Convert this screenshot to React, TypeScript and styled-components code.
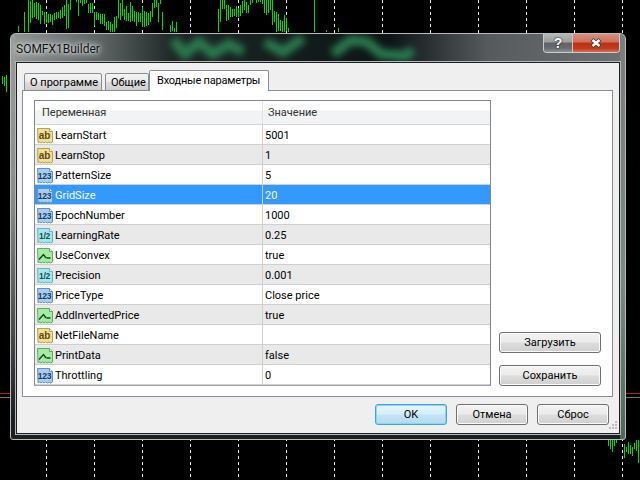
import styled, { createGlobalStyle } from 'styled-components';

const GlobalStyle = createGlobalStyle`
  html, body { margin: 0; padding: 0; background: #000; }
  body { font-family: Roboto, "Liberation Sans", Arial, sans-serif; font-size: 11px; color: #000; }
`;

const Desktop = styled.div`
  position: relative;
  width: 640px;
  height: 480px;
  overflow: hidden;
  background: #000;
`;

const ChartLayer = styled.svg`
  position: absolute;
  inset: 0;
`;

const Window = styled.div`
  position: absolute;
  left: 10px;
  top: 33px;
  width: 616px;
  height: 407px;
  box-sizing: border-box;
  display: flex;
  flex-direction: column;
  border: 1px solid #b9bcbd;
  border-radius: 6px 6px 3px 3px;
  padding: 0 5px 5px 4px;
  overflow: hidden;
  background:
    linear-gradient(180deg, #9a9d9d 0, #8a8d8d 40%, #1c2022 95%) left / 5px 100% no-repeat,
    linear-gradient(180deg, #7a7d7d 0, #7a8a84 60%, #4a6a58 100%) right / 5px 100% no-repeat,
    #1b2022;
`;

const TitleBar = styled.div`
  position: relative;
  height: 27px;
  flex: none;
  display: flex;
  align-items: center;
  padding: 1px 0 0 1px;
  background: linear-gradient(90deg, #8f9493 0, #5a6060 15%, #1e2727 26%, #15201f 40%, #0d1416 62%, #565a5c 78%, #6d7172 100%);
`;

const TitleGlow = styled.svg`
  position: absolute;
  left: 0;
  top: 0;
`;

const TitleText = styled.span`
  position: relative;
  font-size: 12px;
  color: #111;
  text-shadow: 0 0 6px #d8dcdc, 0 0 3px #d8dcdc, 0 0 8px #d8dcdc;
`;

const CaptionButtons = styled.div`
  position: absolute;
  top: 0;
  right: 0;
  display: flex;
  height: 18px;
  border: 1px solid #c9cccd;
  border-top: none;
  border-radius: 0 0 4px 4px;
  overflow: hidden;
`;

const CaptionButton = styled.div<{ $close?: boolean }>`
  display: flex;
  align-items: center;
  justify-content: center;
  box-sizing: border-box;
  width: ${(p) => (p.$close ? '47px' : '28px')};
  border-left: ${(p) => (p.$close ? '1px solid #e0c0b8' : 'none')};
  background: ${(p) =>
    p.$close
      ? 'linear-gradient(180deg, #d8907e 0, #cc705a 45%, #bb3014 50%, #c23a1c 80%, #d2705a 100%)'
      : 'linear-gradient(180deg, #b5b7b8 0, #9a9c9e 45%, #5e6266 50%, #6a6e72 80%, #8e9295 100%)'};
`;

const HelpMark = styled.span`
  font-family: "Liberation Sans", sans-serif;
  font-weight: 700;
  font-size: 14px;
  line-height: 1;
  color: #fff;
  text-shadow: 0 0 1px #222, 0 0 2px #222;
`;

const Client = styled.div`
  flex: 1;
  min-height: 0;
  position: relative;
  display: flex;
  flex-direction: column;
  background: #efefef;
  border: 1px solid #1c2022;
  box-shadow: 0 0 0 1px #b4b8b8;
  margin: 0 0 0 1px;
  padding: 7px 7px 0 5px;
`;

const TabStrip = styled.div`
  height: 21px;
  flex: none;
  display: flex;
  align-items: flex-end;
  padding-left: 2px;
  position: relative;
  z-index: 1;
  margin-bottom: -1px;
`;

const Tab = styled.div<{ $active?: boolean; $w: number; $gap?: number }>`
  box-sizing: border-box;
  width: ${(p) => p.$w}px;
  height: ${(p) => (p.$active ? '21px' : '18px')};
  margin-right: ${(p) => p.$gap ?? 0}px;
  padding: ${(p) => (p.$active ? '2px 0 0 7px' : '1px 0 0 5px')};
  border: 1px solid #898c95;
  border-bottom: ${(p) => (p.$active ? 'none' : '1px solid #898c95')};
  border-radius: 2px 2px 0 0;
  line-height: 15px;
  letter-spacing: ${(p) => (p.$active ? '-0.2px' : '0')};
  white-space: nowrap;
  background: ${(p) => (p.$active ? '#fff' : 'linear-gradient(180deg, #f3f3f3 0, #ebebeb 48%, #dcdcdc 52%, #cfcfcf 100%)')};
`;

const Panel = styled.div`
  box-sizing: border-box;
  width: 591px;
  height: 307px;
  flex: none;
  display: flex;
  align-items: flex-end;
  background: #fff;
  border: 1px solid #898c95;
  padding: 9px 11px 10px 11px;
`;

const Grid = styled.div`
  box-sizing: border-box;
  width: 457px;
  height: 286px;
  flex: none;
  border: 1px solid #828790;
  border-bottom-color: #a0a3aa;
`;

const HeaderRow = styled.div`
  display: grid;
  grid-template-columns: 227px 1fr;
  height: 24px;
  box-sizing: border-box;
  border-bottom: 1px solid #d5d5d5;
  background: linear-gradient(180deg, #fff 0, #fff 40%, #f2f3f5 42%, #f2f3f5 100%);
`;

const HeaderCell = styled.div`
  display: flex;
  align-items: center;
  padding-left: 7px;
  height: 23px;
  color: #333;
  & + & {
    border-left: 1px solid #e3e4e6;
    padding-left: 5px;
  }
`;

const Row = styled.div<{ $alt: boolean; $selected: boolean }>`
  display: grid;
  grid-template-columns: 227px 1fr;
  height: 20px;
  box-sizing: border-box;
  border-bottom: 1px solid #cfcfcf;
  background: ${(p) => (p.$selected ? '#3399ff' : p.$alt ? '#e9e9e9' : '#fff')};
  color: ${(p) => (p.$selected ? '#fff' : '#000')};
`;

const NameCell = styled.div`
  display: flex;
  align-items: center;
  gap: 2px;
  padding: 2px 0 0 2px;
  overflow: hidden;
`;

const ValueCell = styled.div`
  display: flex;
  align-items: center;
  padding: 2px 0 0 2px;
  border-left: 1px solid #cfcfcf;
`;

const SideColumn = styled.div`
  width: 102px;
  margin-left: 8px;
  display: flex;
  flex-direction: column;
  gap: 12px;
`;

const Button = styled.div<{ $primary?: boolean; $w?: number }>`
  box-sizing: border-box;
  width: ${(p) => (p.$w ? `${p.$w}px` : '100%')};
  height: 21px;
  display: flex;
  align-items: center;
  justify-content: center;
  border: 1px solid ${(p) => (p.$primary ? '#3aa6e0' : '#707070')};
  border-radius: 3px;
  background: ${(p) =>
    p.$primary
      ? 'linear-gradient(180deg, #e6f5fc 0, #d6eefa 48%, #c2e4f6 52%, #b4daf0 100%)'
      : 'linear-gradient(180deg, #f2f2f2 0, #ebebeb 48%, #dddddd 52%, #cfcfcf 100%)'};
  box-shadow: inset 0 0 0 1px ${(p) => (p.$primary ? '#8fd3f5' : '#fbfbfb')};
`;

const Footer = styled.div`
  display: flex;
  justify-content: flex-end;
  gap: 9px;
  padding: 7px 3px 0 0;
`;

const Grip = styled.svg`
  position: absolute;
  right: 1px;
  bottom: 1px;
`;

type Kind = 'ab' | 'int' | 'frac' | 'bool';

const palette: Record<Kind, { fill: string; edge: string; ink: string; label: string }> = {
  ab: { fill: '#efdf97', edge: '#b69f4e', ink: '#5b4a10', label: 'ab' },
  int: { fill: '#a9cdf0', edge: '#5f90c6', ink: '#123a66', label: '123' },
  frac: { fill: '#a8e6ea', edge: '#5fb5c0', ink: '#14505a', label: '1/2' },
  bool: { fill: '#a6eaa6', edge: '#56b05a', ink: '#124a16', label: '' },
};

function TypeIcon({ kind }: { kind: Kind }) {
  const c = palette[kind];
  return (
    <svg width="16" height="16" viewBox="0 0 16 16" style={{ flex: 'none' }}>
      <path
        d="M.5 .5h12l3 3v10.500l-2 1-1.500-1-1.500 1-2-1-1.500 1-1.500-1-1.500 1-1.500-1-1.500 .6z"
        fill={c.fill}
        stroke={c.edge}
      />
      <path d="M12.500 .5v3h3" fill="#fff" stroke={c.edge} />
      {kind === 'bool' ? (
        <path d="M2 11.500l4.500-5 2.500 3.500M9.500 10h4" fill="none" stroke={c.ink} strokeWidth="1.400" />
      ) : (
        <text
          x="7.500"
          y="10.500"
          textAnchor="middle"
          fontSize={kind === 'ab' ? 10 : 8.500}
          fontWeight={700}
          letterSpacing={kind === 'ab' ? 0 : -0.3}
          fontFamily="'Liberation Sans', sans-serif"
          fill={c.ink}
        >
          {c.label}
        </text>
      )}
    </svg>
  );
}

const params: { name: string; value: string; kind: Kind }[] = [
  { name: 'LearnStart', value: '5001', kind: 'ab' },
  { name: 'LearnStop', value: '1', kind: 'ab' },
  { name: 'PatternSize', value: '5', kind: 'int' },
  { name: 'GridSize', value: '20', kind: 'int' },
  { name: 'EpochNumber', value: '1000', kind: 'int' },
  { name: 'LearningRate', value: '0.25', kind: 'frac' },
  { name: 'UseConvex', value: 'true', kind: 'bool' },
  { name: 'Precision', value: '0.001', kind: 'frac' },
  { name: 'PriceType', value: 'Close price', kind: 'int' },
  { name: 'AddInvertedPrice', value: 'true', kind: 'bool' },
  { name: 'NetFileName', value: '', kind: 'ab' },
  { name: 'PrintData', value: 'false', kind: 'bool' },
  { name: 'Throttling', value: '0', kind: 'int' },
];

// x, top, bottom of each chart bar
const bars: number[][] = [
  [18, 26, 32], [24, 12, 32], [28, 0, 32], [30, 1, 23], [32, 0, 18], [34, 3, 17], [36, 2, 19], [38, 3, 20], [40, 5, 24],
  [42, 11, 15], [44, 12, 24], [46, 13, 23], [48, 14, 23], [50, 14, 22], [52, 15, 25], [54, 13, 20], [56, 12, 19], [58, 12, 18],
  [60, 10, 19], [62, 7, 18], [64, 5, 16], [66, 0, 29], [68, 4, 28], [70, 0, 10], [76, 0, 2], [78, 0, 16], [80, 0, 3], [82, 0, 6],
  [84, 0, 4], [86, 0, 3], [88, 4, 13], [90, 3, 13], [92, 3, 13], [94, 12, 26], [96, 12, 20], [98, 13, 20], [100, 14, 24],
  [102, 14, 24], [104, 14, 26], [106, 22, 30], [108, 21, 30], [110, 22, 32], [112, 24, 32], [114, 17, 32], [116, 16, 28],
  [118, 0, 18], [120, 3, 20], [122, 0, 16], [124, 9, 20], [126, 6, 21], [128, 13, 21], [130, 2, 22], [132, 6, 21], [134, 11, 22],
  [136, 12, 26], [138, 12, 22], [140, 13, 22], [142, 7, 27], [144, 11, 27], [146, 12, 26], [148, 13, 25], [150, 11, 22],
  [152, 3, 17], [154, 0, 8], [156, 0, 7], [158, 3, 22], [160, 0, 4], [162, 12, 30],
  [170, 25, 32], [172, 21, 31], [174, 28, 32], [176, 22, 32], [218, 9, 32], [220, 0, 22], [222, 0, 9], [224, 0, 9], [226, 5, 21],
  [228, 5, 20], [230, 7, 17], [232, 9, 17], [234, 9, 16], [236, 6, 17], [238, 8, 17], [240, 5, 16], [242, 1, 13], [244, 0, 10],
  [246, 2, 13], [248, 5, 13], [250, 0, 5], [252, 0, 3], [256, 0, 3], [258, 0, 2], [260, 0, 2], [262, 0, 4], [264, 0, 13],
  [266, 0, 15], [268, 0, 13], [270, 0, 10], [272, 0, 25], [274, 11, 22], [276, 12, 32], [278, 14, 31], [280, 20, 31], [282, 21, 32],
  [284, 15, 32], [286, 18, 31], [288, 28, 32], [314, 0, 32], [326, 30, 32], [338, 28, 32],
  [2, 76, 84], [4, 77, 86], [6, 75, 92],
  [608, 440, 446], [610, 440, 449], [612, 440, 452], [614, 440, 446], [616, 440, 443],
  [624, 444, 458], [626, 447, 452], [628, 442, 454], [630, 445, 454], [632, 447, 456], [634, 443, 449], [636, 440, 451], [638, 440, 463],
];

const gridLines = [46, 94, 142, 190, 238, 286, 334, 382, 430, 478, 526, 574, 622];

export default function App() {
  return (
    <Desktop>
      <GlobalStyle />
      <ChartLayer width="640" height="480" shapeRendering="crispEdges">
        {gridLines.map((x) => (
          <line key={x} x1={x + 0.5} x2={x + 0.5} y1={0} y2={480} stroke="#e8e8e8" strokeDasharray="3 3" />
        ))}
        {bars.map(([x, a, b]) => (
          <rect key={`${x}-${a}`} x={x} y={a} width={1} height={b - a} fill="#00e000" />
        ))}
        <rect x={0} y={393} width={640} height={1} fill="#c01818" />
        <rect x={0} y={397} width={640} height={1} fill="#777" />
      </ChartLayer>
      <Window>
        <TitleBar>
          <TitleGlow width="606" height="27">
            <defs>
              <filter id="blur" x="-20%" y="-80%" width="140%" height="260%">
                <feGaussianBlur stdDeviation="3.500" />
              </filter>
            </defs>
            <path
              d="M158 6l12 14 14-12 14 12 16-10 14 8M250 8l18 10 20-14M318 20l18-14 16 2 14 12 24 2 8-6"
              fill="none"
              stroke="#2a7a50"
              strokeWidth="10"
              filter="url(#blur)"
            />
          </TitleGlow>
          <TitleText>SOMFX1Builder</TitleText>
          <CaptionButtons>
            <CaptionButton>
              <HelpMark>?</HelpMark>
            </CaptionButton>
            <CaptionButton $close>
              <svg width="12" height="10" viewBox="0 0 12 10">
                <path d="M2 1.500l8 7M10 1.500l-8 7" stroke="#39393f" strokeWidth="4" />
                <path d="M2.500 2l7 6M9.500 2l-7 6" stroke="#fff" strokeWidth="2.400" />
              </svg>
            </CaptionButton>
          </CaptionButtons>
        </TitleBar>
        <Client>
          <TabStrip>
            <Tab $w={78} $gap={3}>О программе</Tab>
            <Tab $w={44}>Общие</Tab>
            <Tab $active $w={120}>Входные параметры</Tab>
          </TabStrip>
          <Panel>
            <Grid>
              <HeaderRow>
                <HeaderCell>Переменная</HeaderCell>
                <HeaderCell>Значение</HeaderCell>
              </HeaderRow>
              {params.map((p, i) => (
                <Row key={p.name} $alt={i % 2 === 1} $selected={p.name === 'GridSize'}>
                  <NameCell>
                    <TypeIcon kind={p.kind} />
                    {p.name}
                  </NameCell>
                  <ValueCell>{p.value}</ValueCell>
                </Row>
              ))}
            </Grid>
            <SideColumn>
              <Button>Загрузить</Button>
              <Button>Сохранить</Button>
            </SideColumn>
          </Panel>
          <Footer>
            <Button $primary $w={72}>OK</Button>
            <Button $w={72}>Отмена</Button>
            <Button $w={72}>Сброс</Button>
          </Footer>
          <Grip width="12" height="12" viewBox="0 0 12 12">
            <path d="M9 1h2v2H9zM6 4h2v2H6zM9 4h2v2H9zM3 7h2v2H3zM6 7h2v2H6zM9 7h2v2H9z" fill="#bdbdbd" />
          </Grip>
        </Client>
      </Window>
    </Desktop>
  );
}
